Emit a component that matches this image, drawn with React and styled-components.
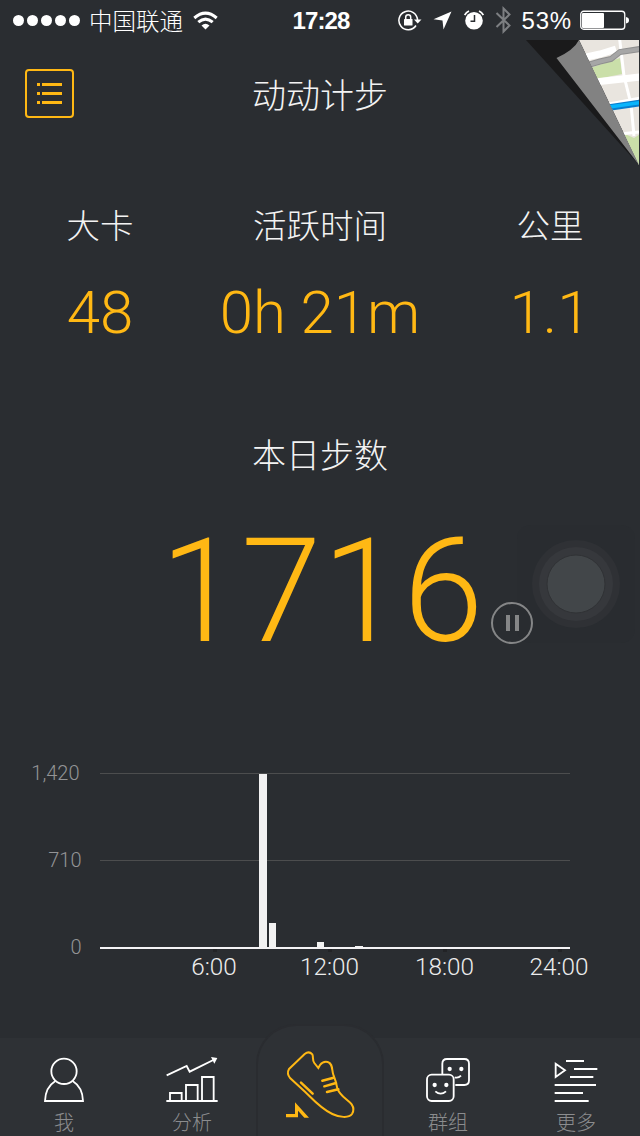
import React from 'react';
import styled, { createGlobalStyle } from 'styled-components';

const GlobalStyle = createGlobalStyle`
  * { box-sizing: border-box; }
  body { margin: 0; background: #2a2d31; }
`;

const amber = '#ffb814';
const latin = `Roboto, "Liberation Sans", "Noto Sans CJK SC", sans-serif`;
const han = `"Noto Sans CJK SC", sans-serif`;

const Screen = styled.main`
  position: relative;
  display: flex;
  flex-direction: column;
  width: 640px;
  height: 1136px;
  overflow: hidden;
  background: #2a2d31;
  color: #f3f3f3;
  font-family: ${latin};
  font-weight: 300;
`;

const StatusBar = styled.header`
  display: grid;
  grid-template-columns: 1fr auto 1fr;
  align-items: center;
  height: 40px;
  padding: 0 11px 0 13px;
  color: #fff;
`;

const StatusGroup = styled.div`
  display: flex;
  align-items: center;
  justify-content: ${(p) => (p.$end ? 'flex-end' : 'flex-start')};
`;

const Signal = styled.div`
  display: flex;
  gap: 3px;
  margin-right: 9px;
`;

const SignalDot = styled.i`
  width: 11px;
  height: 11px;
  border-radius: 50%;
  background: #fff;
`;

const Carrier = styled.span`
  margin-right: 10px;
  font: 300 23.5px/40px ${han};
`;

const Clock = styled.time`
  padding-top: 2px;
  font: 700 24px/38px "Liberation Sans", sans-serif;
  letter-spacing: -0.9px;
`;

const Percent = styled.span`
  margin: 0 8px 0 10px;
  padding-top: 2px;
  font: 400 24px/38px "Liberation Sans", sans-serif;
  letter-spacing: 0.8px;
`;

const StatusIcon = styled.svg`
  display: block;
  flex: none;
  margin-left: ${(p) => p.$gap || 0}px;
`;

const TitleBar = styled.div`
  display: grid;
  grid-template-columns: 49px 1fr 49px;
  align-items: center;
  height: 107px;
  padding: 0 25px;
`;

const MenuButton = styled.button`
  display: grid;
  place-items: center;
  width: 49px;
  height: 49px;
  padding: 0;
  border: 2px solid ${amber};
  border-radius: 4px;
  background: none;
`;

const Title = styled.h1`
  margin: 0;
  text-align: center;
  font: 300 34px/50px ${han};
`;

const PageCurl = styled.svg`
  position: absolute;
  top: 40px;
  right: 0;
`;

const Stats = styled.section`
  display: grid;
  grid-template-columns: 200px 240px 180px;
  height: 202px;
  padding-top: 52px;
`;

const Stat = styled.div`
  display: flex;
  flex-direction: column;
  align-items: center;
  margin: ${(p) => (p.$last ? '0 -20px 0 20px' : '0')};
`;

const StatLabel = styled.span`
  font: 300 33.5px/50px ${han};
`;

const StatValue = styled.span`
  margin-top: 29px;
  color: ${amber};
  font-size: 60px;
  line-height: 70px;
  white-space: nowrap;
`;

const Today = styled.section`
  display: flex;
  flex-direction: column;
  align-items: center;
  height: 401px;
  padding-top: 80px;
`;

const StepRow = styled.div`
  display: flex;
  align-items: flex-end;
  width: 100%;
  height: 170px;
  margin-top: 27px;
  padding-left: 160px;
`;

const Steps = styled.span`
  width: 331px;
  color: ${amber};
  font-size: 145px;
  line-height: 170px;
  letter-spacing: 0.6px;
`;

const PauseButton = styled.button`
  position: relative;
  z-index: 1;
  display: flex;
  align-items: center;
  justify-content: center;
  gap: 5px;
  width: 42px;
  height: 42px;
  margin-bottom: 32px;
  padding: 0;
  border: 2px solid #858687;
  border-radius: 50%;
  background: none;
`;

const PauseBar = styled.i`
  width: 4px;
  height: 16px;
  background: #858687;
`;

const AssistiveTouch = styled.div`
  position: absolute;
  left: 517px;
  top: 525px;
  display: grid;
  place-items: center;
  width: 118px;
  height: 118px;
  border-radius: 14px;
  background: #292c30;
`;

const Chart = styled.svg`
  display: block;
  font-family: ${latin};
  font-weight: 300;
`;

const TabBar = styled.nav`
  display: grid;
  grid-template-columns: repeat(5, 128px);
  height: 98px;
  margin-top: auto;
  background: #2e3135;
`;

const Tab = styled.a`
  display: flex;
  flex-direction: column;
  align-items: center;
  padding-top: 17px;
  color: #8b8c8e;
`;

const TabLabel = styled.span`
  margin-top: 3px;
  font: 300 20px/28px ${han};
`;

const CenterTab = styled.a`
  display: flex;
  justify-content: center;
  height: 114px;
  margin-top: -14px;
  padding-top: 23px;
  border: 2px solid #2a2c30;
  border-bottom: 0;
  border-radius: 40px 40px 0 0;
  background: #2e3135;
`;

const hours = [
  [214, '6:00'],
  [329.5, '12:00'],
  [444.5, '18:00'],
  [559, '24:00'],
];
const bars = [
  [259, 774, 8],
  [269, 923, 7],
  [317, 942, 7],
  [355, 946, 8],
];

function HourlyChart() {
  return (
    <Chart width="640" height="240" viewBox="0 750 640 240">
      <g fill="#939496" fontSize="20" textAnchor="end">
        <text x="79.500" y="780">1,420</text>
        <text x="81.500" y="867">710</text>
        <text x="81.500" y="954">0</text>
      </g>
      <path d="M100 773.5H570M100 860.5H570" stroke="#4c4d4e" />
      {bars.map(([x, y, w]) => (
        <rect key={x} x={x} y={y} width={w} height={948 - y} fill="#f2f2f2" />
      ))}
      <rect x="100" y="947" width="470" height="2" fill="#f4f3f5" />
      {[213, 328, 443, 558].map((x) => (
        <rect key={x} x={x} y="949" width="4" height="3" fill="#222326" />
      ))}
      <g fill="#ececec" fontSize="24.300" textAnchor="middle">
        {hours.map(([x, label]) => (
          <text key={label} x={x} y="975">{label}</text>
        ))}
      </g>
    </Chart>
  );
}

function MapCorner() {
  return (
    <PageCurl width="120" height="130" viewBox="520 40 120 130">
      <defs>
        <clipPath id="corner">
          <path d="M579 40H639V165Z" />
        </clipPath>
      </defs>
      <path d="M526 40H580L639 165Z" fill="#1a1a1b" />
      <g clipPath="url(#corner)">
        <rect x="575" y="40" width="65" height="126" fill="#e9e5df" />
        <path d="M590 68L620 58L622 74L597 79Z" fill="#cadfa9" />
        <path d="M625 145V134L634 138L640 134V170Z" fill="#cadfa9" />
        <path d="M582 58L600 54L616 49M595 82L640 77" stroke="#fff" strokeWidth="7" fill="none" />
        <path d="M619.500 38L624 76L631 104L634 136M604 105L640 98M620 134L640 132" stroke="#fff" strokeWidth="3" fill="none" />
        <path d="M588 65L600 61.500L611 59L620 52L640 49" stroke="#8f8f8f" strokeWidth="6" fill="none" />
        <path d="M588 65L600 61.500L611 59L620 52L640 49" stroke="#a6a6a6" strokeWidth="4" fill="none" />
        <path d="M606 108L640 103" stroke="#087dce" strokeWidth="6.500" />
        <path d="M606 107.500L640 102.500" stroke="#08b5fc" strokeWidth="3.500" />
      </g>
      <path d="M556.500 58Q574 50 579 40L639 165Z" fill="#828282" />
    </PageCurl>
  );
}

export default function App() {
  return (
    <Screen>
      <GlobalStyle />
      <StatusBar>
        <StatusGroup>
          <Signal>
            {[0, 1, 2, 3, 4].map((n) => <SignalDot key={n} />)}
          </Signal>
          <Carrier>中国联通</Carrier>
          <StatusIcon width="25" height="19" viewBox="0 0 25 19" fill="none" stroke="#fff" strokeWidth="3">
            <path d="M1.300 7Q12.500 -2.700 23.700 7M5.300 11.200Q12.500 5 19.700 11.200" />
            <path d="M8.500 14.500Q12.500 11.200 16.500 14.500L12.500 18.500Z" fill="#fff" stroke="none" />
          </StatusIcon>
        </StatusGroup>
        <Clock>17:28</Clock>
        <StatusGroup $end>
          <StatusIcon width="24" height="21" viewBox="0 0 24 21" fill="none" stroke="#fff" strokeWidth="1.500">
            <path d="M18 15.500A9.300 9.300 0 1 1 19.500 10" />
            <path d="M16 9.500H23.500L19.700 13.500Z" fill="#fff" stroke="none" />
            <rect x="6" y="9" width="8.500" height="6.500" rx="0.500" fill="#fff" stroke="none" />
            <path d="M7.700 9.500V7.300A2.500 2.500 0 0 1 12.700 7.300V9.500" />
          </StatusIcon>
          <StatusIcon $gap={11} width="19" height="19" viewBox="0 0 19 19" fill="#fff">
            <path d="M18.500 0.500L10.500 18.500L9.500 9.500L0.500 8.200Z" />
          </StatusIcon>
          <StatusIcon $gap={12} width="20" height="20" viewBox="0 0 20 20">
            <circle cx="10" cy="10.700" r="8.800" fill="#fff" />
            <path d="M0.700 5A9 9 0 0 1 5 1M15 1A9 9 0 0 1 19.300 5" fill="none" stroke="#fff" strokeWidth="1.700" />
            <path d="M10.500 5V11.300H6.500" fill="none" stroke="#2a2d31" strokeWidth="1.500" />
          </StatusIcon>
          <StatusIcon $gap={11} width="17" height="28" viewBox="0 0 17 28" fill="none" stroke="#7d7f82" strokeWidth="2">
            <path d="M1.500 7L14.500 19.500L8.500 25.500V2.500L14.500 8.500L1.500 21" />
          </StatusIcon>
          <Percent>53%</Percent>
          <StatusIcon width="49" height="20" viewBox="0 0 49 20" fill="none">
            <rect x="0.750" y="1.250" width="44" height="18" rx="3" stroke="#fff" strokeWidth="1.300" />
            <rect x="2" y="3" width="22" height="15" rx="1" fill="#fff" />
            <path d="M46 7Q49 7.500 49 10.300Q49 13 46 13.500Z" fill="#fff" />
          </StatusIcon>
        </StatusGroup>
      </StatusBar>

      <TitleBar>
        <MenuButton aria-label="menu">
          <svg width="25" height="21" viewBox="0 0 25 21" fill={amber}>
            {[0, 9, 18].map((y) => (
              <path key={y} d={`M0 ${y}h3v3h-3zM5 ${y}h20v3h-20z`} />
            ))}
          </svg>
        </MenuButton>
        <Title>动动计步</Title>
      </TitleBar>
      <MapCorner />

      <Stats>
        <Stat>
          <StatLabel>大卡</StatLabel>
          <StatValue>48</StatValue>
        </Stat>
        <Stat>
          <StatLabel>活跃时间</StatLabel>
          <StatValue>0h 21m</StatValue>
        </Stat>
        <Stat $last>
          <StatLabel>公里</StatLabel>
          <StatValue>1.1</StatValue>
        </Stat>
      </Stats>

      <Today>
        <Title as="h2">本日步数</Title>
        <StepRow>
          <Steps>1716</Steps>
          <PauseButton aria-label="pause">
            <PauseBar />
            <PauseBar />
          </PauseButton>
        </StepRow>
      </Today>
      <AssistiveTouch>
        <svg width="90" height="90" viewBox="-45 -45 90 90">
          <circle r="44" fill="#2f3135" />
          <circle r="37" fill="#36383c" />
          <circle r="29" fill="#424649" stroke="#303235" />
        </svg>
      </AssistiveTouch>

      <HourlyChart />

      <TabBar>
        <Tab>
          <svg width="42" height="50" viewBox="129 105 126 150" fill="none" stroke="#fff" strokeWidth="5.500">
            <circle cx="192" cy="154" r="38" />
            <path d="M166 183Q136 202 135 243H249Q248 202 218 183" />
          </svg>
          <TabLabel>我</TabLabel>
        </Tab>
        <Tab>
          <svg width="52" height="50" viewBox="498 105 156 150" fill="none" stroke="#fff" strokeWidth="5.500">
            <path d="M500 166L560 138L569 155L640 120M499 243H653M510 242V219H545V242M558 242V195H593V242M606 242V171H641V242" />
            <path d="M633 111L652 114L643 131Z" fill="#fff" stroke="none" />
          </svg>
          <TabLabel>分析</TabLabel>
        </Tab>
        <CenterTab>
          <svg width="73" height="70" viewBox="132 85 219 210" fill="none" stroke={amber} strokeWidth="6">
            <path d="M147 145L194 100Q207 90 217 101C221 110 216 117 223 127L235 142L240 133Q249 121 263 124C279 128 275 148 280 162Q288 182 292 203C301 228 323 236 335 251Q345 266 336 280C326 294 296 289 277 280C241 263 216 233 195 213L151 173Q139 159 147 145Z" />
            <path d="M183 186L218 219M247 180L281 171M253 197L288 187M261 214L295 206" strokeWidth="7.500" strokeLinecap="round" />
            <path d="M138 280H165V245L207 291H193L174 270V290H138Z" fill={amber} stroke="none" />
          </svg>
        </CenterTab>
        <Tab>
          <svg width="44" height="50" viewBox="78 105 132 150" fill="none" stroke="#fff" strokeWidth="5.500">
            <path d="M127 162V131Q127 117 141 117H193Q207 117 207 131V181Q207 195 193 195H166" />
            <rect x="81" y="164" width="80" height="79" rx="14" />
            <path d="M106 214Q122 228 138 214M164 172Q175 175 183 167" />
            <g fill="#fff" stroke="none">
              <circle cx="149" cy="147" r="6.500" />
              <circle cx="184" cy="147" r="6.500" />
              <circle cx="104" cy="195" r="6.500" />
              <circle cx="139" cy="195" r="6.500" />
            </g>
          </svg>
          <TabLabel>群组</TabLabel>
        </Tab>
        <Tab>
          <svg width="44" height="50" viewBox="462 105 132 150" fill="none" stroke="#fff" strokeWidth="5.500">
            <path d="M467 131V171L495 151ZM498 123H552M522 147H592M510 171H580M464 195H588M464 219H549M464 243H566" />
          </svg>
          <TabLabel>更多</TabLabel>
        </Tab>
      </TabBar>
    </Screen>
  );
}
